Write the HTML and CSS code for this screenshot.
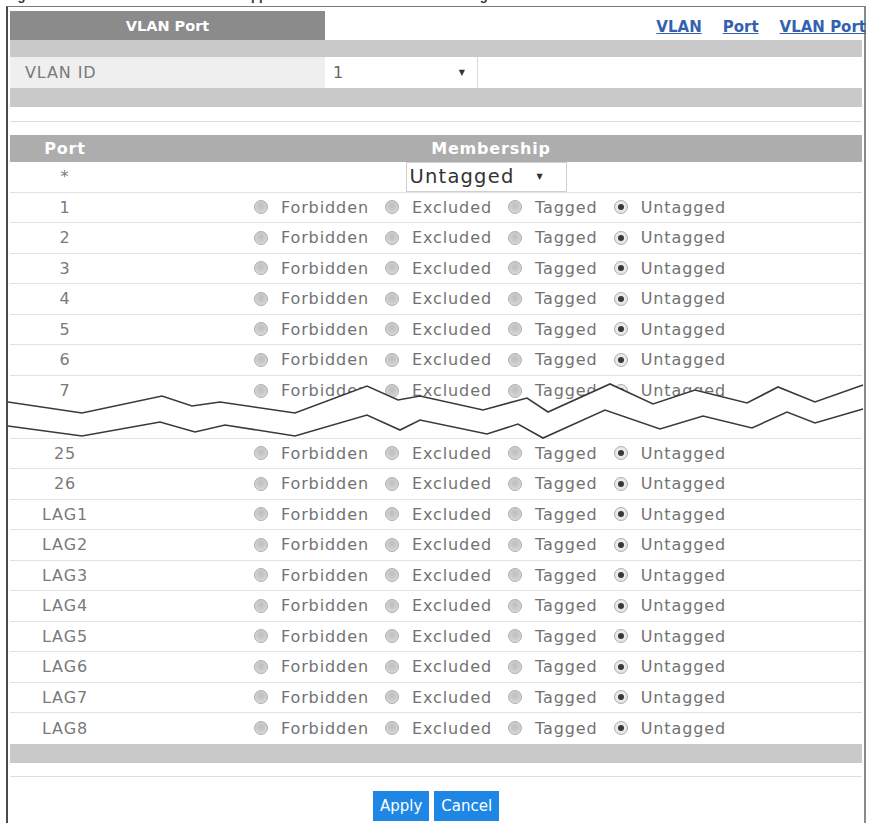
FILE: index.html
```html
<!DOCTYPE html>
<html>
<head>
<meta charset="utf-8">
<link rel="stylesheet" href="styles.css">
</head>
<body>
<div class="caption"><span>Figure 139 &nbsp; MENU &gt; Advanced Application &gt; VLAN &gt; VLAN Configuration &gt; VLAN Port</span></div>
<div class="frame">
  <div class="tabbar">
    <div class="tab">VLAN Port</div>
    <nav class="links"><a href="#">VLAN</a><a href="#">Port</a><a href="#">VLAN Port</a></nav>
  </div>
  <div class="bar"></div>
  <div class="idrow">
    <div class="idlabel">VLAN ID</div>
    <div class="idselect"><span>1</span><span class="arrow">▼</span></div>
    <div class="idrest"></div>
  </div>
  <div class="bar bar2"></div>
  <div class="sep"></div>

  <div class="table">
    <div class="thead"><div>Port</div><div>Membership</div></div>
    <div class="row"><div class="port">*</div><div class="mem"><div class="sel"><span>Untagged</span><span class="arrow">▼</span></div></div></div>
    <div class="row"><div class="port">1</div><div class="mem"><label class="opt"><span class="rb"></span><span class="lbl">Forbidden</span></label><label class="opt"><span class="rb"></span><span class="lbl">Excluded</span></label><label class="opt"><span class="rb"></span><span class="lbl">Tagged</span></label><label class="opt"><span class="rb on"></span><span class="lbl">Untagged</span></label></div></div>
    <div class="row"><div class="port">2</div><div class="mem"><label class="opt"><span class="rb"></span><span class="lbl">Forbidden</span></label><label class="opt"><span class="rb"></span><span class="lbl">Excluded</span></label><label class="opt"><span class="rb"></span><span class="lbl">Tagged</span></label><label class="opt"><span class="rb on"></span><span class="lbl">Untagged</span></label></div></div>
    <div class="row"><div class="port">3</div><div class="mem"><label class="opt"><span class="rb"></span><span class="lbl">Forbidden</span></label><label class="opt"><span class="rb"></span><span class="lbl">Excluded</span></label><label class="opt"><span class="rb"></span><span class="lbl">Tagged</span></label><label class="opt"><span class="rb on"></span><span class="lbl">Untagged</span></label></div></div>
    <div class="row"><div class="port">4</div><div class="mem"><label class="opt"><span class="rb"></span><span class="lbl">Forbidden</span></label><label class="opt"><span class="rb"></span><span class="lbl">Excluded</span></label><label class="opt"><span class="rb"></span><span class="lbl">Tagged</span></label><label class="opt"><span class="rb on"></span><span class="lbl">Untagged</span></label></div></div>
    <div class="row"><div class="port">5</div><div class="mem"><label class="opt"><span class="rb"></span><span class="lbl">Forbidden</span></label><label class="opt"><span class="rb"></span><span class="lbl">Excluded</span></label><label class="opt"><span class="rb"></span><span class="lbl">Tagged</span></label><label class="opt"><span class="rb on"></span><span class="lbl">Untagged</span></label></div></div>
    <div class="row"><div class="port">6</div><div class="mem"><label class="opt"><span class="rb"></span><span class="lbl">Forbidden</span></label><label class="opt"><span class="rb"></span><span class="lbl">Excluded</span></label><label class="opt"><span class="rb"></span><span class="lbl">Tagged</span></label><label class="opt"><span class="rb on"></span><span class="lbl">Untagged</span></label></div></div>
    <div class="row last"><div class="port">7</div><div class="mem"><label class="opt"><span class="rb"></span><span class="lbl">Forbidden</span></label><label class="opt"><span class="rb"></span><span class="lbl">Excluded</span></label><label class="opt"><span class="rb"></span><span class="lbl">Tagged</span></label><label class="opt"><span class="rb on"></span><span class="lbl">Untagged</span></label></div></div>
  </div>

  <div class="break">
    <svg class="zigzag" width="870" height="60" viewBox="0 380 870 60">
      <polygon fill="#fff" points="8,401 82,412 162,395 192,405 220,401 295,412 367,385 398,399 420,395 483,409 527,397 548,411 610,383 653,403 695,389 747,402 778,386 815,401 863,384 863,408 815,422 787,411 752,427 703,415 660,428 605,409 543,437 518,423 487,433 420,419 400,429 367,414 295,435 225,424 195,431 160,421 82,435 8,425"/>
      <polyline fill="none" stroke="#3a3a3a" stroke-width="1.6" stroke-linejoin="miter" points="8,401 82,412 162,395 192,405 220,401 295,412 367,385 398,399 420,395 483,409 527,397 548,411 610,383 653,403 695,389 747,402 778,386 815,401 863,384"/>
      <polyline fill="none" stroke="#3a3a3a" stroke-width="1.6" stroke-linejoin="miter" points="8,425 82,435 160,421 195,431 225,424 295,435 367,414 400,429 420,419 487,433 518,423 543,437 605,409 660,428 703,415 752,427 787,411 815,422 863,408"/>
    </svg>
  </div>

  <div class="table lower">
    <div class="row"><div class="port">25</div><div class="mem"><label class="opt"><span class="rb"></span><span class="lbl">Forbidden</span></label><label class="opt"><span class="rb"></span><span class="lbl">Excluded</span></label><label class="opt"><span class="rb"></span><span class="lbl">Tagged</span></label><label class="opt"><span class="rb on"></span><span class="lbl">Untagged</span></label></div></div>
    <div class="row"><div class="port">26</div><div class="mem"><label class="opt"><span class="rb"></span><span class="lbl">Forbidden</span></label><label class="opt"><span class="rb"></span><span class="lbl">Excluded</span></label><label class="opt"><span class="rb"></span><span class="lbl">Tagged</span></label><label class="opt"><span class="rb on"></span><span class="lbl">Untagged</span></label></div></div>
    <div class="row"><div class="port">LAG1</div><div class="mem"><label class="opt"><span class="rb"></span><span class="lbl">Forbidden</span></label><label class="opt"><span class="rb"></span><span class="lbl">Excluded</span></label><label class="opt"><span class="rb"></span><span class="lbl">Tagged</span></label><label class="opt"><span class="rb on"></span><span class="lbl">Untagged</span></label></div></div>
    <div class="row"><div class="port">LAG2</div><div class="mem"><label class="opt"><span class="rb"></span><span class="lbl">Forbidden</span></label><label class="opt"><span class="rb"></span><span class="lbl">Excluded</span></label><label class="opt"><span class="rb"></span><span class="lbl">Tagged</span></label><label class="opt"><span class="rb on"></span><span class="lbl">Untagged</span></label></div></div>
    <div class="row"><div class="port">LAG3</div><div class="mem"><label class="opt"><span class="rb"></span><span class="lbl">Forbidden</span></label><label class="opt"><span class="rb"></span><span class="lbl">Excluded</span></label><label class="opt"><span class="rb"></span><span class="lbl">Tagged</span></label><label class="opt"><span class="rb on"></span><span class="lbl">Untagged</span></label></div></div>
    <div class="row"><div class="port">LAG4</div><div class="mem"><label class="opt"><span class="rb"></span><span class="lbl">Forbidden</span></label><label class="opt"><span class="rb"></span><span class="lbl">Excluded</span></label><label class="opt"><span class="rb"></span><span class="lbl">Tagged</span></label><label class="opt"><span class="rb on"></span><span class="lbl">Untagged</span></label></div></div>
    <div class="row"><div class="port">LAG5</div><div class="mem"><label class="opt"><span class="rb"></span><span class="lbl">Forbidden</span></label><label class="opt"><span class="rb"></span><span class="lbl">Excluded</span></label><label class="opt"><span class="rb"></span><span class="lbl">Tagged</span></label><label class="opt"><span class="rb on"></span><span class="lbl">Untagged</span></label></div></div>
    <div class="row"><div class="port">LAG6</div><div class="mem"><label class="opt"><span class="rb"></span><span class="lbl">Forbidden</span></label><label class="opt"><span class="rb"></span><span class="lbl">Excluded</span></label><label class="opt"><span class="rb"></span><span class="lbl">Tagged</span></label><label class="opt"><span class="rb on"></span><span class="lbl">Untagged</span></label></div></div>
    <div class="row"><div class="port">LAG7</div><div class="mem"><label class="opt"><span class="rb"></span><span class="lbl">Forbidden</span></label><label class="opt"><span class="rb"></span><span class="lbl">Excluded</span></label><label class="opt"><span class="rb"></span><span class="lbl">Tagged</span></label><label class="opt"><span class="rb on"></span><span class="lbl">Untagged</span></label></div></div>
    <div class="row"><div class="port">LAG8</div><div class="mem"><label class="opt"><span class="rb"></span><span class="lbl">Forbidden</span></label><label class="opt"><span class="rb"></span><span class="lbl">Excluded</span></label><label class="opt"><span class="rb"></span><span class="lbl">Tagged</span></label><label class="opt"><span class="rb on"></span><span class="lbl">Untagged</span></label></div></div>
  </div>

  <div class="bar bar3"></div>
  <div class="sep sep2"></div>
  <div class="buttons"><button class="btn">Apply</button><button class="btn">Cancel</button></div>
</div>
</body>
</html>
```
FILE: styles.css
```css
* { box-sizing: border-box; }
html, body { overflow: hidden; }
body {
  margin: 0;
  width: 870px;
  background: #fff;
  font-family: "DejaVu Sans", sans-serif;
  color: #707070;
}
.caption { height: 6px; overflow: hidden; padding-left: 6px; }
.caption span {
  display: block;
  margin-top: -12px;
  font: bold 13px/16px "Liberation Sans", Arial, sans-serif;
  color: #333;
  white-space: nowrap;
  word-spacing: 6px;
}
.frame {
  margin-left: 6px;
  width: 860px;
  border-top: 1px solid #7a7a7a;
  border-left: 2px solid #4a4a4a;
  border-right: 2px solid #8a8a8a;
  padding: 4px 2px 40px;
}
.tabbar { display: flex; height: 29px; }
.tab {
  width: 315px;
  background: #8b8b8b;
  color: #fff;
  font-weight: bold;
  font-size: 14.5px;
  display: flex;
  align-items: center;
  justify-content: center;
}
.links {
  margin-left: auto;
  margin-right: -4px;
  display: flex;
  gap: 21px;
  align-items: flex-end;
  padding-bottom: 4px;
}
.links a { color: #3461ad; font-weight: bold; font-size: 15px; text-decoration: underline; }
.bar { height: 17px; background: #c9c9c9; }
.bar2, .bar3 { height: 19px; }
.idrow { display: flex; height: 31px; }
.idlabel {
  width: 315px;
  background: #efefef;
  padding-left: 15px;
  display: flex;
  align-items: center;
  font-size: 16px;
  letter-spacing: 0.9px;
  color: #7a7a7a;
}
.idselect {
  width: 153px;
  background: #fff;
  border-right: 1px solid #d8d8d8;
  display: flex;
  align-items: center;
  justify-content: space-between;
  padding: 0 12px 0 8px;
  font-size: 16px;
  color: #666;
}
.arrow { font-size: 8px; color: #333; }
.idrest { flex: 1; background: #fff; }
.sep { height: 15px; border-bottom: 1px solid #dddddd; margin-bottom: 13px; }
.sep2 { height: 14px; margin-bottom: 14px; }
.thead {
  display: grid;
  grid-template-columns: 110px 1fr;
  height: 27px;
  background: #adadad;
  color: #fff;
  font-weight: bold;
  font-size: 16px;
  letter-spacing: 0.8px;
  align-items: center;
  text-align: center;
}
.row {
  display: grid;
  grid-template-columns: 110px 1fr;
  height: 30.5px;
  border-bottom: 1px solid #e2e2e2;
  align-items: center;
  font-size: 16px;
  letter-spacing: 0.9px;
}
.row.last { border-bottom: none; }
.lower { border-top: 1px solid #e2e2e2; }
.lower .row:last-child { border-bottom: none; }
.port { text-align: center; color: #7a7a7a; }
.mem { display: flex; justify-content: center; align-items: center; height: 100%; }
.sel {
  width: 161px;
  height: 100%;
  border: 1px solid #cfcfcf;
  display: flex;
  align-items: center;
  padding-left: 3px;
  font-size: 19.5px;
  letter-spacing: 1.2px;
  color: #333;
  margin-right: 10px;
}
.sel .arrow { margin-left: 22px; }
.opt { display: flex; align-items: center; }
.rb {
  flex: none;
  width: 14px;
  height: 14px;
  border-radius: 50%;
  border: 1px solid #adadad;
  background: radial-gradient(circle at 50% 40%, #bdbdbd 0, #cdcdcd 50%, #e6e6e6 100%);
  display: flex;
  align-items: center;
  justify-content: center;
  margin-left: -2px;
}
.rb.on { background: radial-gradient(circle at 50% 45%, #f4f4f4 0, #dedede 100%); }
.rb.on::after {
  content: "";
  width: 6px;
  height: 6px;
  border-radius: 50%;
  background: #383838;
}
.lbl { margin-left: 13px; margin-right: 18px; color: #727272; }
.opt:last-child .lbl { margin-right: 0; }
.break { position: relative; height: 31.5px; background: #fff; }
.zigzag { position: absolute; left: -10px; top: -25.5px; overflow: visible; }
.buttons { display: flex; justify-content: center; gap: 5px; }
.btn {
  height: 30px;
  padding: 0 7px;
  border: none;
  background: #1e87e6;
  color: #fff;
  font-family: "DejaVu Sans", sans-serif;
  font-size: 15px;
}
```
